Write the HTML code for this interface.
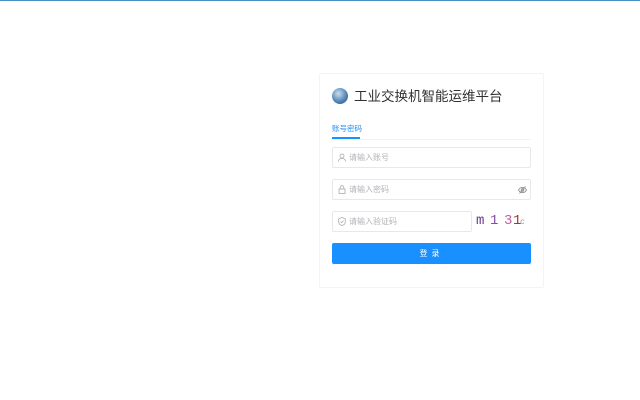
<!DOCTYPE html>
<html><head><meta charset="utf-8"><style>
*{box-sizing:border-box;margin:0;padding:0}
body{width:640px;height:400px;background:#fff;font-family:"Liberation Sans","Noto Sans CJK SC",sans-serif;position:relative;overflow:hidden}
.top{position:absolute;left:0;top:0;width:640px;height:1px;background:#4a8fc4}
.card{position:absolute;left:319px;top:73px;width:225px;height:215px;border:1px solid #f3f4f6;border-radius:2px}
.logo{position:absolute;left:332px;top:88px;width:16px;height:16px;border-radius:50%;background:radial-gradient(circle at 40% 35%,#c8dff2,#4d7fb0 60%,#2c4f7a)}
.title{position:absolute;left:354px;top:88px;font-size:13.5px;color:#303133;line-height:18px}
.tab{position:absolute;left:332px;top:124px;font-size:7.5px;color:#1890ff;line-height:10px}
.tabline{position:absolute;left:332px;top:137px;width:28px;height:2px;background:#1890ff}
.tabb{position:absolute;left:332px;top:139px;width:199px;height:1px;background:#f0f2f5}
.in{position:absolute;left:332px;width:199px;height:21px;border:1px solid #e6e8ec;border-radius:2px;font-size:8px;color:#b0b3b8;line-height:19px;padding-left:16px}
.in svg{position:absolute;left:5px;top:5px}
.btn{position:absolute;left:332px;top:243px;width:199px;height:21px;background:#1890ff;border-radius:2px;color:#fff;font-size:8px;text-align:center;line-height:21px;letter-spacing:4px}
.cap{position:absolute;left:476px;top:210px;font-family:"Liberation Mono",monospace;font-size:14px;line-height:22px;white-space:nowrap}
.cap span{display:inline-block}
</style></head><body>
<div class="top"></div>
<div class="card"></div>
<div class="logo"></div>
<div class="title">工业交换机智能运维平台</div>
<div class="tab">账号密码</div>
<div class="tabb"></div><div class="tabline"></div>
<div class="in" style="top:147px"><svg width="8" height="9" viewBox="0 0 8 9" fill="none" stroke="#aaa" stroke-width="0.8"><circle cx="4" cy="3" r="2"/><path d="M0.5 8.5c0-2 1.5-3 3.5-3s3.5 1 3.5 3"/></svg>请输入账号</div>
<div class="in" style="top:179px"><svg width="8" height="9" viewBox="0 0 8 9" fill="none" stroke="#aaa" stroke-width="0.8"><rect x="1" y="4" width="6" height="4.5"/><path d="M2.2 4V2.5a1.8 1.8 0 0 1 3.6 0V4"/></svg>请输入密码<svg style="left:185px;top:6px" width="9" height="8" viewBox="0 0 9 8" fill="none" stroke="#888" stroke-width="0.8"><path d="M0.5 4c2-3.5 6-3.5 8 0c-2 3.5-6 3.5-8 0z"/><circle cx="4.5" cy="4" r="1.3"/><path d="M1.5 7.5L7.5 0.5"/></svg></div>
<div class="in" style="top:211px;width:140px"><svg width="8" height="9" viewBox="0 0 8 9" fill="none" stroke="#aaa" stroke-width="0.8"><path d="M4 0.5l3.3 1.3v2.7c0 2-1.5 3.5-3.3 4-1.8-.5-3.3-2-3.3-4V1.8z"/><path d="M2.5 4.5l1.1 1.1 2-2"/></svg>请输入验证码</div>
<div class="cap"><span style="color:#6a3c8c;width:14px">m</span><span style="color:#8c4aa8;width:14px">1</span><span style="color:#c060a0;width:9px">3</span><span style="color:#b03030;width:7px">1</span><span style="color:#999;font-size:8px">c</span></div>
<div class="btn">登录</div>
</body></html>
